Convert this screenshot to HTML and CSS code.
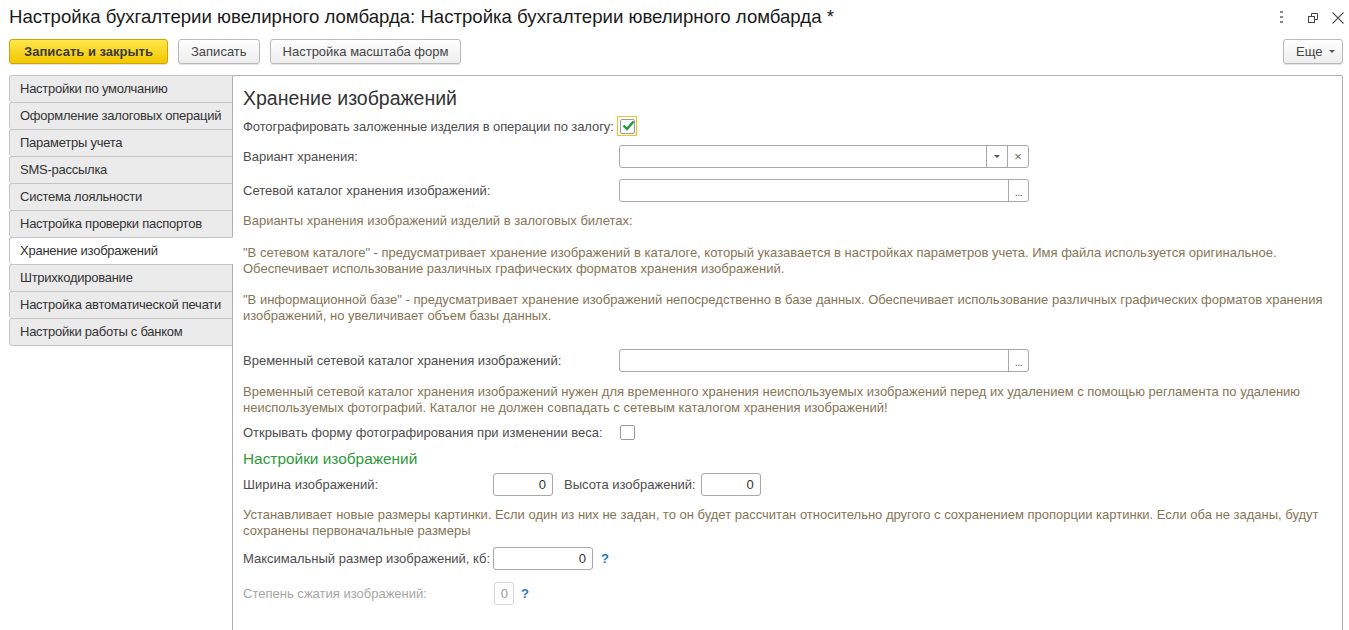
FILE: index.html
```html
<!DOCTYPE html>
<html>
<head>
  <meta charset="UTF-8">
  <title>Настройка бухгалтерии ювелирного ломбарда</title>
  <link rel="stylesheet" href="styles.css">
</head>
<body>
  <div class="window">

    <!-- Title bar -->
    <header class="titlebar">
      <h1 class="title">Настройка бухгалтерии ювелирного ломбарда: Настройка бухгалтерии ювелирного ломбарда *</h1>
      <div class="win-controls">
        <svg class="ico-dots" width="3" height="12" viewBox="0 0 3 12">
          <rect x="0" y="0" width="3" height="2" fill="#8a8a8a"/>
          <rect x="0" y="5" width="3" height="2" fill="#8a8a8a"/>
          <rect x="0" y="10" width="3" height="2" fill="#8a8a8a"/>
        </svg>
        <svg class="ico-restore" width="10" height="10" viewBox="0 0 10 10">
          <rect x="0.5" y="3.5" width="6" height="6" fill="none" stroke="#444"/>
          <path d="M3.5 3.5V0.5H9.5V6.5H6.5" fill="none" stroke="#444"/>
        </svg>
        <svg class="ico-close" width="12" height="12" viewBox="0 0 12 12">
          <path d="M0.5 0.5L11.5 11.5M11.5 0.5L0.5 11.5" stroke="#555" stroke-width="1.1"/>
        </svg>
      </div>
    </header>

    <!-- Command bar -->
    <div class="toolbar">
      <button class="btn btn-primary">Записать и закрыть</button>
      <button class="btn">Записать</button>
      <button class="btn">Настройка масштаба форм</button>
      <button class="btn btn-more">Еще <span class="caret"></span></button>
    </div>

    <div class="workspace">
      <!-- Page tabs -->
      <nav class="tabs">
        <div class="tab">Настройки по умолчанию</div>
        <div class="tab">Оформление залоговых операций</div>
        <div class="tab">Параметры учета</div>
        <div class="tab">SMS-рассылка</div>
        <div class="tab">Система лояльности</div>
        <div class="tab">Настройка проверки паспортов</div>
        <div class="tab active">Хранение изображений</div>
        <div class="tab">Штрихкодирование</div>
        <div class="tab">Настройка автоматической печати</div>
        <div class="tab">Настройки работы с банком</div>
      </nav>

      <!-- Page content -->
      <section class="panel">
        <h2 class="panel-title">Хранение изображений</h2>

        <div class="row row-check">
          <span class="label">Фотографировать заложенные изделия в операции по залогу:</span>
          <span class="check-focus">
            <span class="checkbox checked">
              <svg width="13" height="11" viewBox="0 0 13 11">
                <path d="M1.5 5.5L5 9L11.5 1.5" fill="none" stroke="#1f9a3a" stroke-width="2.4"/>
              </svg>
            </span>
          </span>
        </div>

        <div class="row row-variant">
          <span class="label">Вариант хранения:</span>
          <div class="field">
            <span class="field-text"></span>
            <span class="field-btn"><span class="tri"></span></span>
            <span class="field-btn field-clear">×</span>
          </div>
        </div>

        <div class="row row-net">
          <span class="label">Сетевой каталог хранения изображений:</span>
          <div class="field">
            <span class="field-text"></span>
            <span class="field-btn field-dots">...</span>
          </div>
        </div>

        <div class="note note-variants">
          <p>Варианты хранения изображений изделий в залоговых билетах:</p>
          <p class="gap16">"В сетевом каталоге" - предусматривает хранение изображений в каталоге, который указавается в настройках параметров учета. Имя файла используется оригинальное. Обеспечивает использование различных графических форматов хранения изображений.</p>
          <p class="gap15">"В информационной базе" - предусматривает хранение изображений непосредственно в базе данных. Обеспечивает использование различных графических форматов хранения изображений, но увеличивает объем базы данных.</p>
        </div>

        <div class="row row-temp">
          <span class="label">Временный сетевой каталог хранения изображений:</span>
          <div class="field">
            <span class="field-text"></span>
            <span class="field-btn field-dots">...</span>
          </div>
        </div>

        <div class="note note-temp">
          <p>Временный сетевой каталог хранения изображений нужен для временного хранения неиспользуемых изображений перед их удалением с помощью регламента по удалению неиспользуемых фотографий. Каталог не должен совпадать с сетевым каталогом хранения изображений!</p>
        </div>

        <div class="row row-open">
          <span class="label">Открывать форму фотографирования при изменении веса:</span>
          <span class="checkbox plain"></span>
        </div>

        <h3 class="group-title">Настройки изображений</h3>

        <div class="row row-size">
          <span class="label label-short">Ширина изображений:</span>
          <span class="num num-60">0</span>
          <span class="label-inline">Высота изображений:</span>
          <span class="num num-60">0</span>
        </div>

        <div class="note note-size">
          <p>Устанавливает новые размеры картинки. Если один из них не задан, то он будет рассчитан относительно другого с сохранением пропорции картинки. Если оба не заданы, будут сохранены первоначальные размеры</p>
        </div>

        <div class="row row-max">
          <span class="label label-short">Максимальный размер изображений, кб:</span>
          <span class="num num-100">0</span>
          <span class="help">?</span>
        </div>

        <div class="row row-compress">
          <span class="label label-short disabled">Степень сжатия изображений:</span>
          <span class="num num-small">0</span>
          <span class="help help-near">?</span>
        </div>
      </section>
    </div>
  </div>
</body>
</html>
```

FILE: styles.css
```css
body {
  margin: 0;
  padding: 0;
  background-color: #fff;
  color: #4d4d4d;
  font-family: "Liberation Sans", Arial, sans-serif;
  font-size: 13px;
  overflow: hidden;
}

.window {
  width: 1349px;
  height: 630px;
  overflow: hidden;
}

/* title bar */
.titlebar {
  display: flex;
  justify-content: space-between;
  align-items: flex-start;
  height: 39px;
  padding: 0 5px 0 9px;
  box-sizing: border-box;
}

.title {
  margin: 6px 0 0;
  font-size: 18.6px;
  font-weight: normal;
  line-height: 22px;
  color: #1a1a1a;
}

.win-controls {
  display: flex;
  align-items: flex-start;
  padding-top: 11px;
}

.ico-restore {
  margin-left: 25px;
  margin-top: 2px;
}

.ico-close {
  margin-left: 14px;
  margin-top: 1px;
}

/* command bar */
.toolbar {
  display: flex;
  gap: 10px;
  padding: 0 6px 0 9px;
  height: 25px;
}

.btn {
  height: 25px;
  padding: 0 12px;
  font-family: "Liberation Sans", Arial, sans-serif;
  font-size: 13px;
  color: #444;
  background: linear-gradient(#ffffff, #ededed);
  border: 1px solid #b9b9b9;
  border-radius: 3px;
  box-shadow: 0 1px 1px rgba(0, 0, 0, 0.12);
  cursor: pointer;
}

.btn-primary {
  width: 159px;
  padding: 0;
  font-weight: bold;
  color: #3a3a3a;
  background: linear-gradient(#ffe64a, #f3c700);
  border-color: #c9a900;
}

.btn-more {
  margin-left: auto;
  width: 60px;
  padding: 0 0 0 12px;
  text-align: left;
  display: flex;
  align-items: center;
}

.caret {
  margin-left: 7px;
  width: 0;
  height: 0;
  border-left: 3px solid transparent;
  border-right: 3px solid transparent;
  border-top: 3px solid #555;
}

/* tabs + panel */
.workspace {
  display: flex;
  margin-top: 11px;
  padding: 0 6px 0 9px;
  height: 570px;
}

.tabs {
  width: 224px;
  margin-right: -1px;
  flex-shrink: 0;
  display: flex;
  flex-direction: column;
}

.tab {
  height: 26px;
  line-height: 26px;
  padding-left: 10px;
  color: #333;
  background-color: #ebebeb;
  border: 1px solid #c4c4c4;
  border-bottom: none;
  border-radius: 3px 0 0 3px;
  white-space: nowrap;
  letter-spacing: -0.25px;
  overflow: hidden;
}

.tab:last-child {
  border-bottom: 1px solid #c4c4c4;
}

.tab.active {
  background-color: #fff;
  border-right-color: #fff;
  position: relative;
  z-index: 1;
}

.panel {
  flex: 1;
  border: 1px solid #b0b0b0;
  border-radius: 2px;
  padding: 11px 10px 0 10px;
  background-color: #fff;
}

.panel-title {
  margin: 0;
  height: 22px;
  font-size: 19.5px;
  line-height: 22px;
  font-weight: normal;
  color: #333;
}

/* form rows */
.row {
  display: flex;
  align-items: center;
}

.label {
  width: 376px;
  flex-shrink: 0;
  white-space: nowrap;
}

.label-short {
  width: 250px;
}

.label.disabled {
  color: #a6a6a6;
}

.label-inline {
  margin: 0 5px 0 11px;
  white-space: nowrap;
}

.row-check { margin-top: 6px; height: 22px; }
.row-check .label { letter-spacing: -0.09px; }
.row-variant { margin-top: 8px; }
.row-net { margin-top: 11px; }
.row-temp { margin-top: 25px; }
.row-open { margin-top: 8px; height: 16px; }
.row-size { margin-top: 5px; }
.row-max { margin-top: 8px; }
.row-compress { margin-top: 12px; }

.check-focus {
  width: 18px;
  height: 18px;
  margin-left: -2px;
  border: 1px solid #f0c420;
  display: flex;
  align-items: center;
  justify-content: center;
}

.checkbox {
  width: 13px;
  height: 13px;
  border: 1px solid #9a9a9a;
  border-radius: 2px;
  display: flex;
  align-items: center;
  justify-content: center;
  background-color: #fff;
}

.checkbox svg {
  margin-top: -2px;
  margin-right: -2px;
}

.checkbox.plain {
  margin-left: 1px;
}

.field {
  display: flex;
  width: 408px;
  height: 21px;
  border: 1px solid #a8a8a8;
  border-radius: 3px;
  background-color: #fff;
}

.field-text {
  flex: 1;
}

.field-btn {
  width: 20px;
  border-left: 1px solid #a8a8a8;
  display: flex;
  align-items: center;
  justify-content: center;
  color: #555;
  font-size: 11px;
}

.field-clear {
  font-size: 13px;
  color: #666;
}

.field-dots {
  align-items: flex-end;
  padding-bottom: 5px;
  box-sizing: border-box;
  line-height: 8px;
  letter-spacing: -0.5px;
}

.tri {
  width: 0;
  height: 0;
  border-left: 3px solid transparent;
  border-right: 3px solid transparent;
  border-top: 3px solid #555;
}

/* explanatory notes */
.note {
  color: #857556;
  line-height: 16px;
}

.note p {
  margin: 0;
}

.note .gap16 { margin-top: 16px; }
.note .gap15 { margin-top: 15px; }

.note-variants { margin-top: 11px; }
.note-temp { margin-top: 12px; }
.note-size { margin-top: 11px; }

.group-title {
  margin: 10px 0 0;
  height: 18px;
  line-height: 18px;
  font-size: 15.4px;
  font-weight: normal;
  color: #2f9a3c;
}

/* numeric inputs */
.num {
  height: 21px;
  line-height: 21px;
  border: 1px solid #a8a8a8;
  border-radius: 3px;
  text-align: right;
  padding-right: 6px;
  box-sizing: content-box;
  color: #333;
}

.num-60 { width: 52px; }
.num-100 { width: 92px; }

.num-small {
  width: 13px;
  padding-right: 5px;
  margin-left: 1px;
  color: #999;
  border-color: #d6d6d6;
}

.help {
  margin-left: 8px;
  color: #2b78c2;
  font-weight: bold;
}

.help-near {
  margin-left: 7px;
}
```
